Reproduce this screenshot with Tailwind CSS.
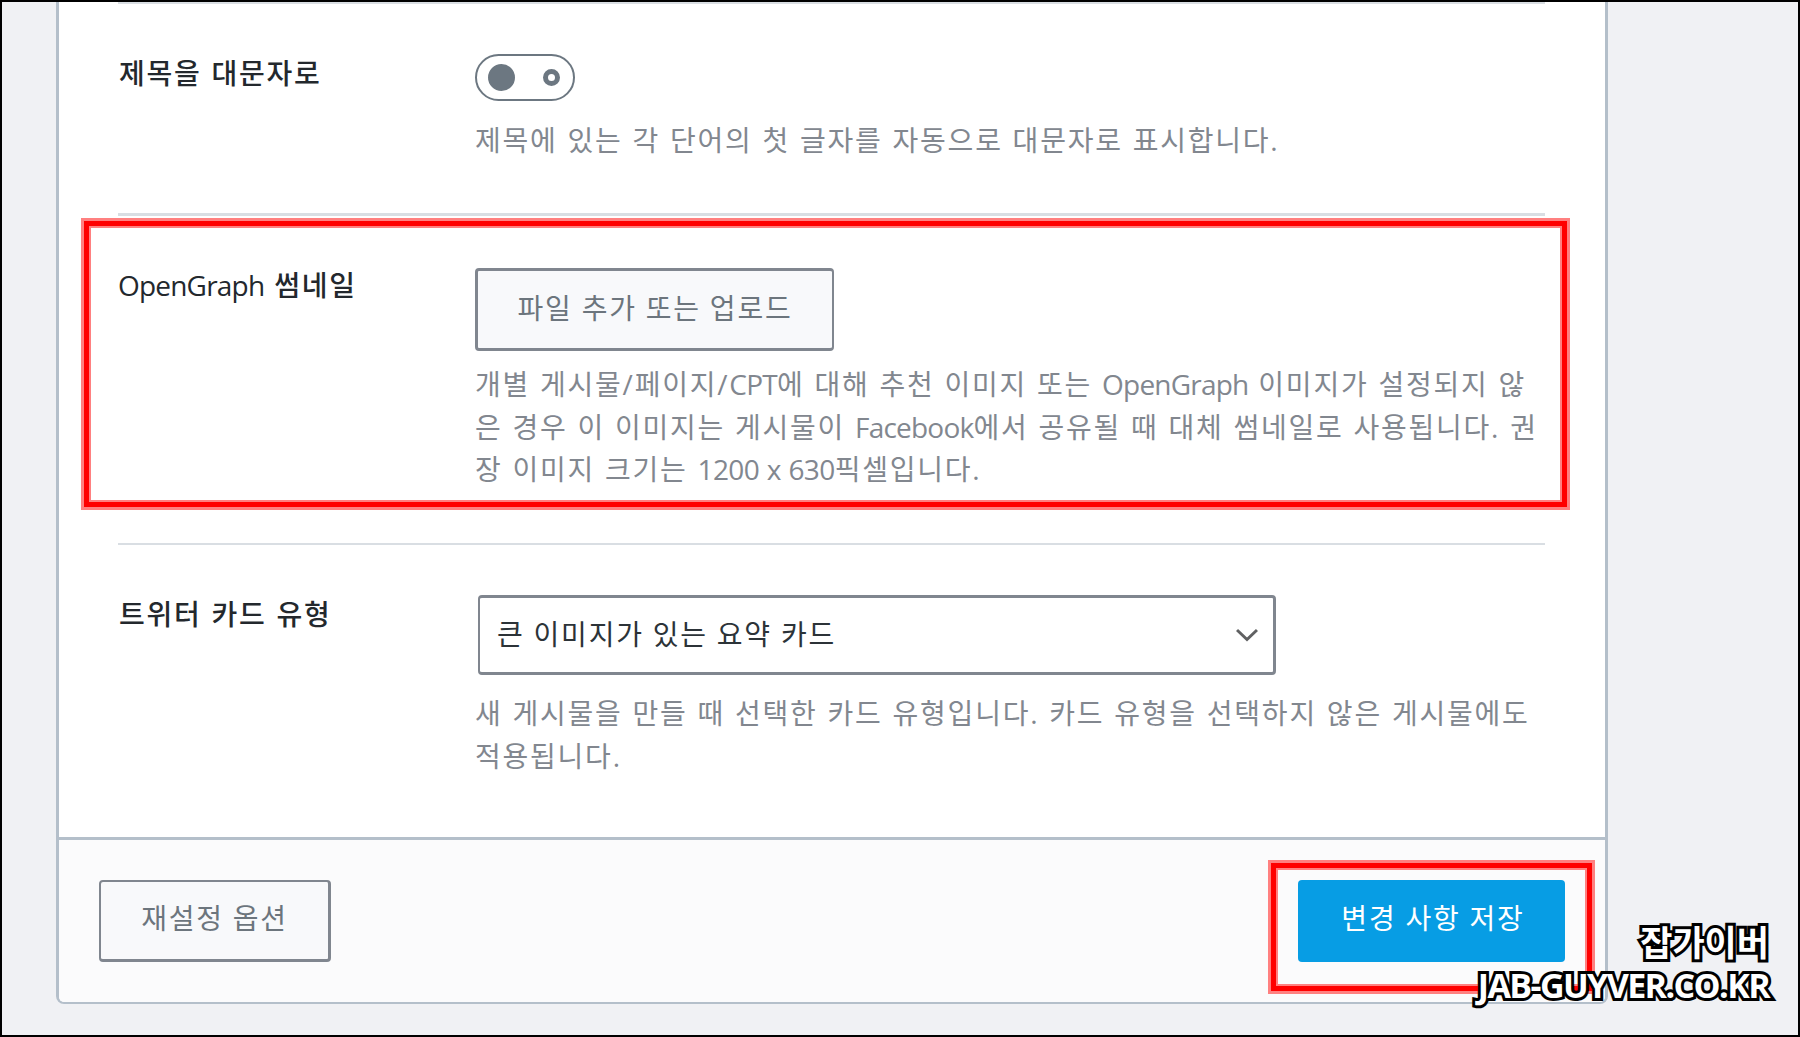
<!DOCTYPE html>
<html lang="ko">
<head>
  <meta charset="UTF-8" />
  <meta name="viewport" content="width=device-width, initial-scale=1.0" />
  <title>OpenGraph 설정</title>
  <script src="https://cdn.jsdelivr.net/npm/@tailwindcss/browser@4"></script>
</head>
<body class="relative h-[1037px] w-[1800px] overflow-hidden border-2 border-black bg-[#f0f1f4] font-['Open_Sans','Noto_Sans_CJK_KR',sans-serif] text-[28px] leading-[42.5px] tracking-[1.77px] whitespace-nowrap [word-spacing:0.9px]">

  <main class="ml-[54px] flex h-[1002px] w-[1552px] flex-col rounded-b-[8px] border-x-[3px] border-b-2 border-[#b4bfca] bg-white">
    <div class="mr-[60px] ml-[59px]">
      <section class="grid h-[211px] grid-cols-[357px_1fr] border-t-2 border-[#d9dee3]">
        <h2 class="pt-[48px] pl-px font-medium text-[#23282d]">제목을 대문자로</h2>
        <div class="pt-[50px]">
          <div class="flex h-[47px] w-[100px] items-center justify-between rounded-full border-2 border-[#6c7781] pr-[13px] pl-[11px]">
            <span class="size-[27px] rounded-full bg-[#6c7781]"></span>
            <span class="size-[17px] rounded-full border-[5px] border-[#6c7781]"></span>
          </div>
          <p class="mt-[18px] text-[#82878f]">제목에 있는 각 단어의 첫 글자를 자동으로 대문자로 표시합니다.</p>
        </div>
      </section>

      <section class="grid h-[330px] grid-cols-[357px_1fr] border-t-[3px] border-[#d9dee3]">
        <h2 class="pt-[48px] font-medium text-[#23282d]"><span class="tracking-[-0.8px]">OpenGraph</span> 썸네일</h2>
        <div class="pt-[52px]">
          <button class="flex h-[83px] w-[359px] items-center justify-center rounded-[4px] border-[3px] border-r-2 border-[#80868f] bg-[#f8f9fb] pb-[3px] text-[#6c757d]">파일 추가 또는 업로드</button>
          <p class="mt-[12px] text-[#82878f]">개별 게시물/페이지/<span class="tracking-[-0.7px]">CPT</span>에 대해 추천 이미지 또는 <span class="tracking-[-0.8px]">OpenGraph</span> 이미지가 설정되지 않<br />은 경우 이 이미지는 게시물이 <span class="tracking-[-0.8px]">Facebook</span>에서 공유될 때 대체 썸네일로 사용됩니다. 권<br />장 이미지 크기는 <span class="tracking-[-0.6px]">1200 x 630</span>픽셀입니다.</p>
        </div>
      </section>

      <section class="grid h-[294px] grid-cols-[357px_1fr] border-t-2 border-[#d9dee3]">
        <h2 class="pt-[48px] pl-px font-medium text-[#23282d]">트위터 카드 유형</h2>
        <div class="pt-[50px]">
          <div class="ml-[3px] flex h-[80px] w-[798px] items-center justify-between rounded-[4px] border-[3px] border-l-2 border-[#80868f] pr-[15px] pl-[17px] text-[#2c3338]">
            <span class="pb-[2px] [word-spacing:0]">큰 이미지가 있는 요약 카드</span>
            <svg class="h-[14px] w-[22px]" viewBox="0 0 22 14" fill="none" stroke="#606162" stroke-width="3"><path d="M1 2 L11 11.5 L21 2" /></svg>
          </div>
          <p class="mt-[17px] text-[#82878f]">새 게시물을 만들 때 선택한 카드 유형입니다. 카드 유형을 선택하지 않은 게시물에도<br />적용됩니다.</p>
        </div>
      </section>
    </div>

    <footer class="flex flex-1 items-start justify-between rounded-b-[5px] border-t-[3px] border-[#b4bfca] bg-[#fbfbfc] px-[40px] pt-[40px]">
      <button class="flex h-[82px] w-[232px] items-center justify-center rounded-[4px] border-2 border-r-[3px] border-b-[3px] border-[#80868f] bg-[#f8f9fb] pb-[4px] text-[#6c757d]">재설정 옵션</button>
      <button class="flex h-[82px] w-[267px] items-center justify-center rounded-[4px] bg-[#079de4] pb-[5px] pl-[3px] text-white">변경 사항 저장</button>
    </footer>
  </main>

  <!-- red callouts -->
  <div class="absolute top-[216px] left-[79px] h-[292px] w-[1489px] border-[3px] border-[#ff8080]">
    <div class="size-full border-[5px] border-[#ff0000]"><div class="size-full border-2 border-[#ff8080]"></div></div>
  </div>
  <div class="absolute top-[858px] left-[1266px] h-[134px] w-[327px] border-[3px] border-[#ff8080]">
    <div class="size-full border-[5px] border-[#ff0000]"><div class="size-full border-2 border-[#ff8080]"></div></div>
  </div>

  <!-- watermark -->
  <div class="absolute top-[919px] right-[29px] text-right text-[35px] leading-[43px] font-bold tracking-normal text-white [-webkit-text-stroke:6px_black] [paint-order:stroke_fill] [stroke-linejoin:round]">
    <p>잡가이버</p>
    <p class="text-[34px] tracking-[-1.6px]">JAB-GUYVER.CO.KR</p>
  </div>

</body>
</html>
